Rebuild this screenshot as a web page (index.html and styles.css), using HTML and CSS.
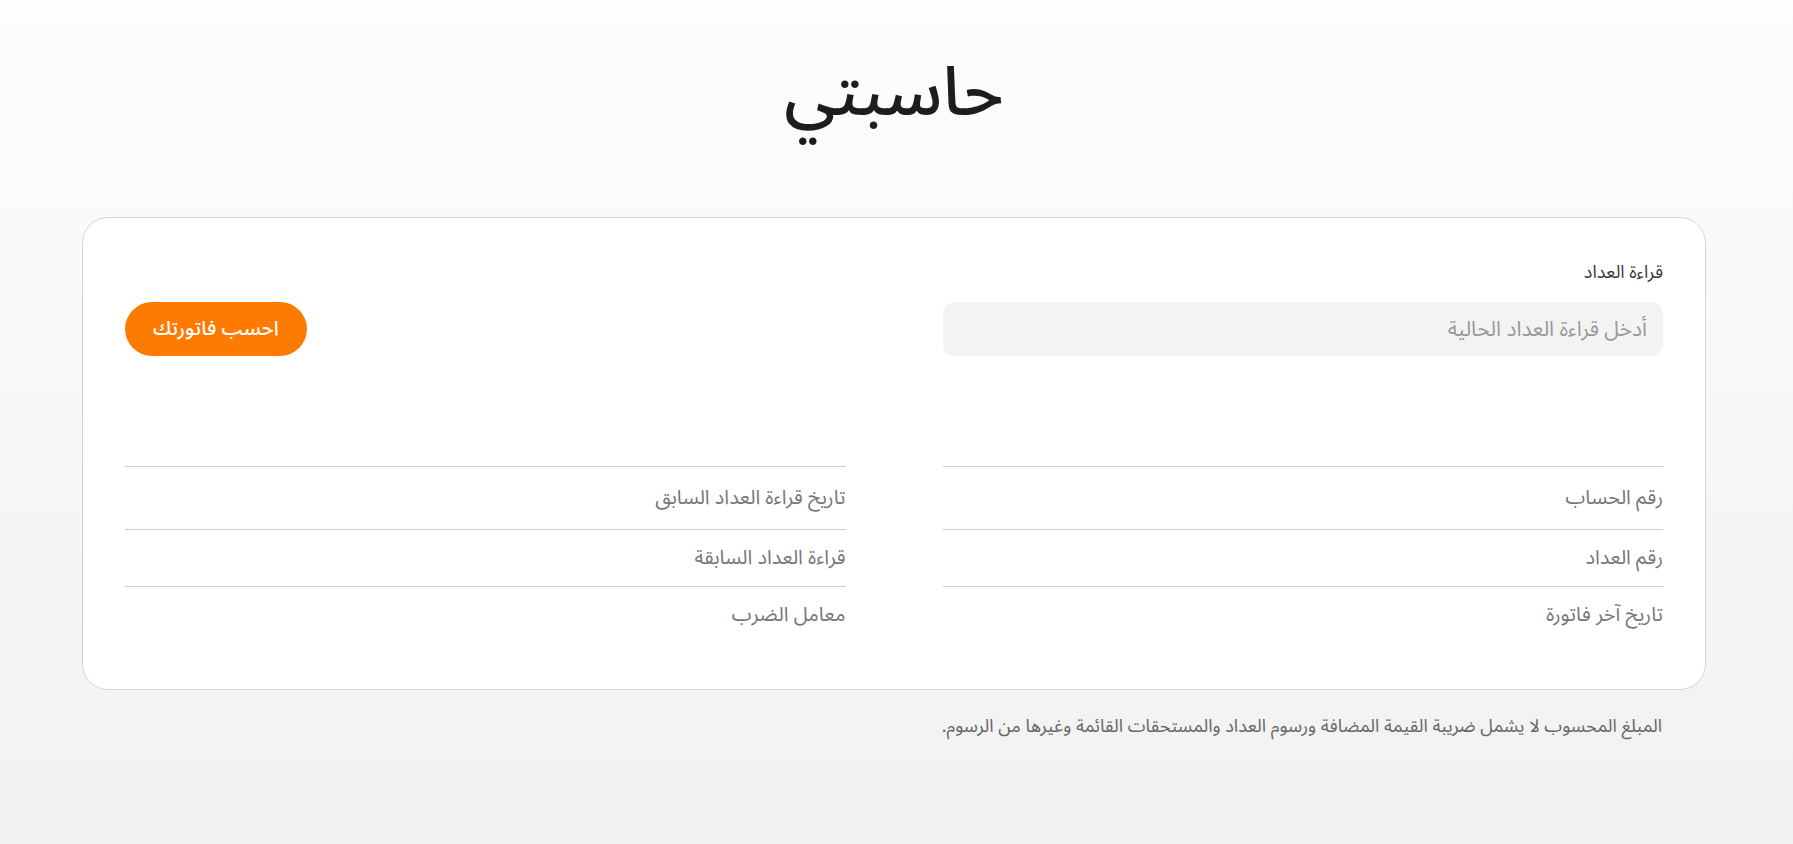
FILE: index.html
```html
<!DOCTYPE html>
<html lang="ar" dir="rtl">
<head>
  <meta charset="UTF-8">
  <meta name="viewport" content="width=device-width, initial-scale=1.0">
  <title>حاسبتي</title>
  <link rel="stylesheet" href="styles.css">
</head>
<body>
  <main class="page">
    <h1 class="title">حاسبتي</h1>
    <section class="card">
      <div class="calc-row">
        <div class="field">
          <label for="reading">قراءة العداد</label>
          <input type="text" id="reading" placeholder="أدخل قراءة العداد الحالية">
        </div>
        <div class="action">
          <button class="btn">احسب فاتورتك</button>
        </div>
      </div>
      <div class="details">
        <div class="detail">رقم الحساب</div>
        <div class="detail">تاريخ قراءة العداد السابق</div>
        <div class="detail">رقم العداد</div>
        <div class="detail">قراءة العداد السابقة</div>
        <div class="detail">تاريخ آخر فاتورة</div>
        <div class="detail">معامل الضرب</div>
      </div>
    </section>
    <p class="note">المبلغ المحسوب لا يشمل ضريبة القيمة المضافة ورسوم العداد والمستحقات القائمة وغيرها من الرسوم.</p>
  </main>
</body>
</html>
```

FILE: styles.css
```css
* { margin: 0; padding: 0; box-sizing: border-box; }
html, body {
  min-height: 100%;
}
body {
  font-family: "Noto Sans Arabic", "DejaVu Sans", sans-serif;
  background: linear-gradient(to bottom, #fdfdfd, #f1f1f1);
  color: #222;
  min-height: 100vh;
}
.page {
  padding: 0 87px 0 82px;
}
.title {
  text-align: center;
  font-size: 68px;
  font-weight: 500;
  line-height: 1;
  padding-top: 60px;
  margin-bottom: 89px;
  color: #1d1d1d;
}
.card {
  background: #fff;
  border: 1px solid #d6d6d6;
  border-radius: 26px;
  padding: 42px 42px 46px;
}
.calc-row,
.details {
  display: grid;
  grid-template-columns: 1fr 1fr;
  column-gap: 97px;
}
.field label {
  display: block;
  font-size: 18px;
  font-weight: 400;
  line-height: 24px;
  color: #3a3a3a;
  margin-bottom: 18px;
}
.field input {
  width: 100%;
  height: 54px;
  border: none;
  border-radius: 12px;
  background: #f3f3f3;
  padding: 0 16px;
  font-family: inherit;
  font-size: 21px;
  color: #333;
  outline: none;
}
.field input::placeholder {
  color: #999;
}
.action {
  display: flex;
  align-items: flex-end;
  justify-content: flex-end;
}
.btn {
  height: 54px;
  padding: 0 28px;
  border: none;
  border-radius: 27px;
  background: #ff7a00;
  color: #fff;
  font-family: inherit;
  font-size: 20px;
  font-weight: 500;
  cursor: pointer;
}
.details {
  margin-top: 110px;
}
.detail {
  border-top: 1px solid #cfcfcf;
  font-size: 20px;
  line-height: 26px;
  color: #777;
  padding: 15px 0;
}
.detail:nth-child(-n+2) {
  padding-top: 18px;
  padding-bottom: 18px;
}
.note {
  margin-top: 17px;
  padding-right: 44px;
  font-size: 18px;
  color: #666;
}
```
